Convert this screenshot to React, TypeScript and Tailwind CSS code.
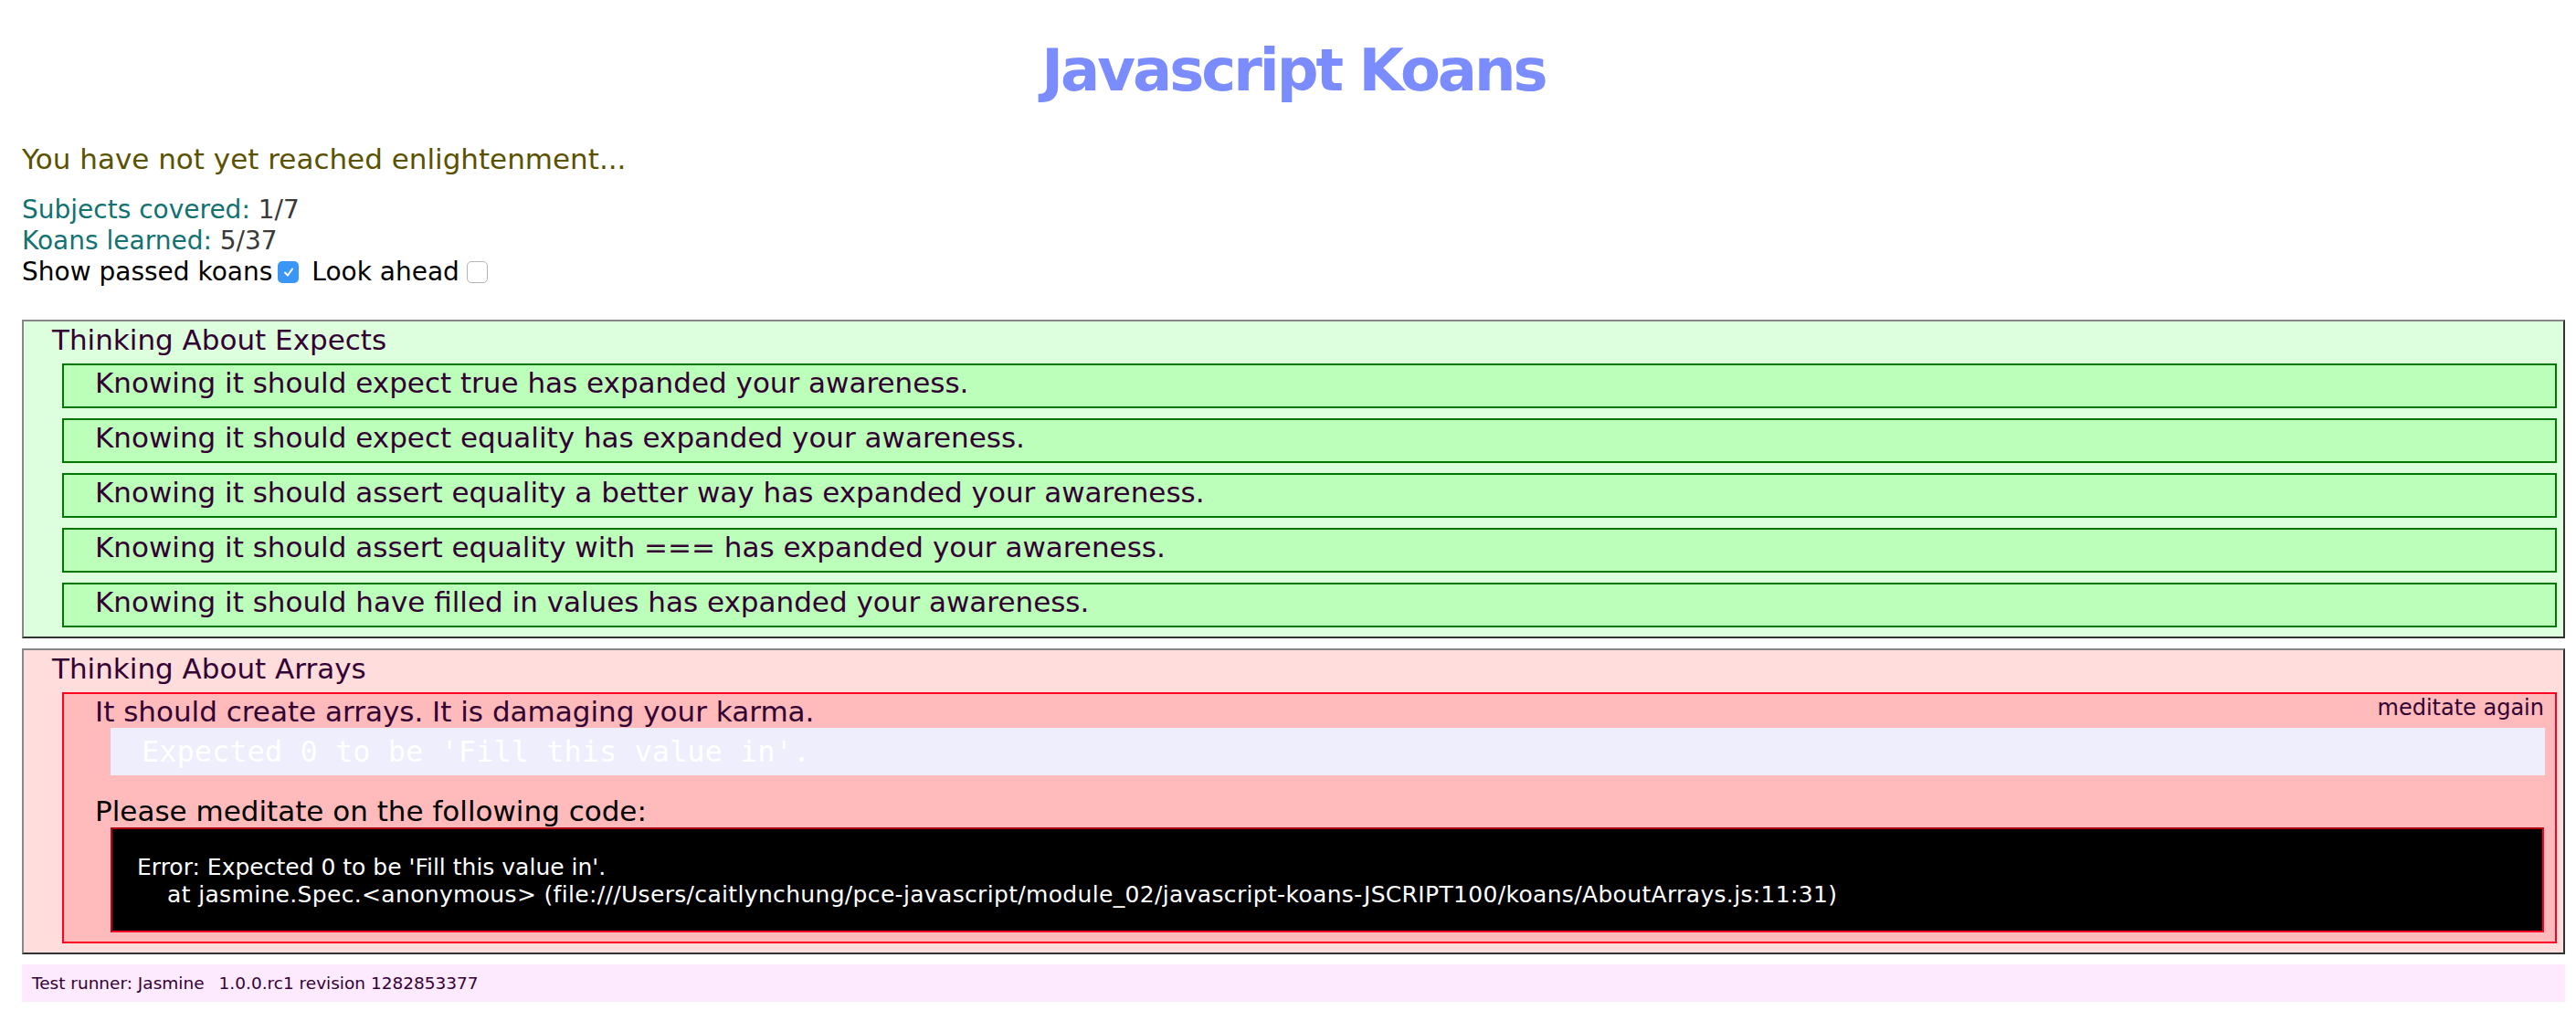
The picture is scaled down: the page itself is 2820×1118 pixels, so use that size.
import React from "react";

const passed = [
  "Knowing it should expect true has expanded your awareness.",
  "Knowing it should expect equality has expanded your awareness.",
  "Knowing it should assert equality a better way has expanded your awareness.",
  "Knowing it should assert equality with === has expanded your awareness.",
  "Knowing it should have filled in values has expanded your awareness.",
];

export default function App() {
  return (
    <div className="min-h-[1118px] bg-white pl-[24px] pr-[12px] text-black" style={{ fontFamily: '"DejaVu Sans", "Noto Sans", sans-serif' }}>
      <h1 className="pt-[39px] text-center text-[64px] font-bold leading-[76px] tracking-[-3px] text-[#7b8cff]">Javascript Koans</h1>

      <div className="mt-[40px] text-[31px] leading-[38px] text-[#5a5200]">You have not yet reached enlightenment...</div>

      <div className="mt-[20px] text-[28px] leading-[34px]">
        <div>
          <span className="text-[#127272]">Subjects covered: </span>
          <span className="text-[#3a3a3a]">1/7</span>
        </div>
        <div>
          <span className="text-[#127272]">Koans learned: </span>
          <span className="text-[#3a3a3a]">5/37</span>
        </div>
        <div className="flex items-center">
          <span>Show passed koans</span>
          <span className="ml-[6px] flex h-[24px] w-[23px] items-center justify-center rounded-[5px] bg-[#3b97f7]">
            <svg width="14" height="14" viewBox="0 0 14 14">
              <path d="M3 7.5 L6 10.5 L11 3.5" fill="none" stroke="white" strokeWidth="2" strokeLinecap="round" strokeLinejoin="round" />
            </svg>
          </span>
          <span className="ml-[14px]">Look ahead</span>
          <span className="ml-[8px] h-[24px] w-[23px] rounded-[5px] border border-[#b5b5b5] bg-white"></span>
        </div>
      </div>

      <div className="mt-[35px] border-2 border-t-[#888888] border-l-[#888888] border-r-[#333333] border-b-[#333333] bg-[#ddffdd] pb-[10px] pr-[7px] pt-[2px] text-[#330033]">
        <div className="pl-[31px] text-[31px] leading-[36px]">Thinking About Expects</div>
        <div className="ml-[42px] mt-[8px] flex flex-col gap-[11px]">
          {passed.map((t) => (
            <div key={t} className="h-[49px] border-2 border-[#007700] bg-[#bbffbb] pl-[34px] pt-[1px] text-[31px] leading-[36px]">
              {t}
            </div>
          ))}
        </div>
      </div>

      <div className="mt-[11px] border-2 border-t-[#888888] border-l-[#888888] border-r-[#333333] border-b-[#333333] bg-[#ffdddd] pb-[10px] pr-[7px] pt-[2px] text-[#330033]">
        <div className="pl-[31px] text-[31px] leading-[36px]">Thinking About Arrays</div>
        <div className="ml-[42px] mt-[8px] border-2 border-[#ff0022] bg-[#ffbbbb] pb-[10px] pt-[1px]">
          <div className="flex items-start justify-between pl-[34px] pr-[12px]">
            <span className="text-[31px] leading-[36px]">It should create arrays. It is damaging your karma.</span>
            <span className="text-[24px] leading-[28px]">meditate again</span>
          </div>
          <div className="ml-[51px] mr-[11px] h-[52px] bg-[#eeeefd] pl-[34px] text-[32px] leading-[52px] text-white" style={{ fontFamily: '"DejaVu Sans Mono", monospace' }}>
            Expected 0 to be 'Fill this value in'.
          </div>
          <div className="mt-[21px] pl-[34px] text-[31px] leading-[36px] text-black">Please meditate on the following code:</div>
          <div className="ml-[51px] mr-[12px] border-2 border-t-[#b0000f] border-l-[#c00010] border-r-[#ff0022] border-b-[#ff0022] bg-black pb-[24px] pl-[27px] pt-[27px] text-[25px] leading-[30px] text-white whitespace-pre">
            <div>Error: Expected 0 to be 'Fill this value in'.</div>
            <div className="tracking-[0.33px]">{"    at jasmine.Spec.<anonymous> (file:///Users/caitlynchung/pce-javascript/module_02/javascript-koans-JSCRIPT100/koans/AboutArrays.js:11:31)"}</div>
          </div>
        </div>
      </div>

      <div className="mt-[11px] flex h-[41px] items-center bg-[#feeafe] pl-[11px] text-[18.5px] text-[#330033]">
        <span>Test runner: Jasmine</span>
        <span className="ml-[16px]">1.0.0.rc1 revision 1282853377</span>
      </div>
    </div>
  );
}
